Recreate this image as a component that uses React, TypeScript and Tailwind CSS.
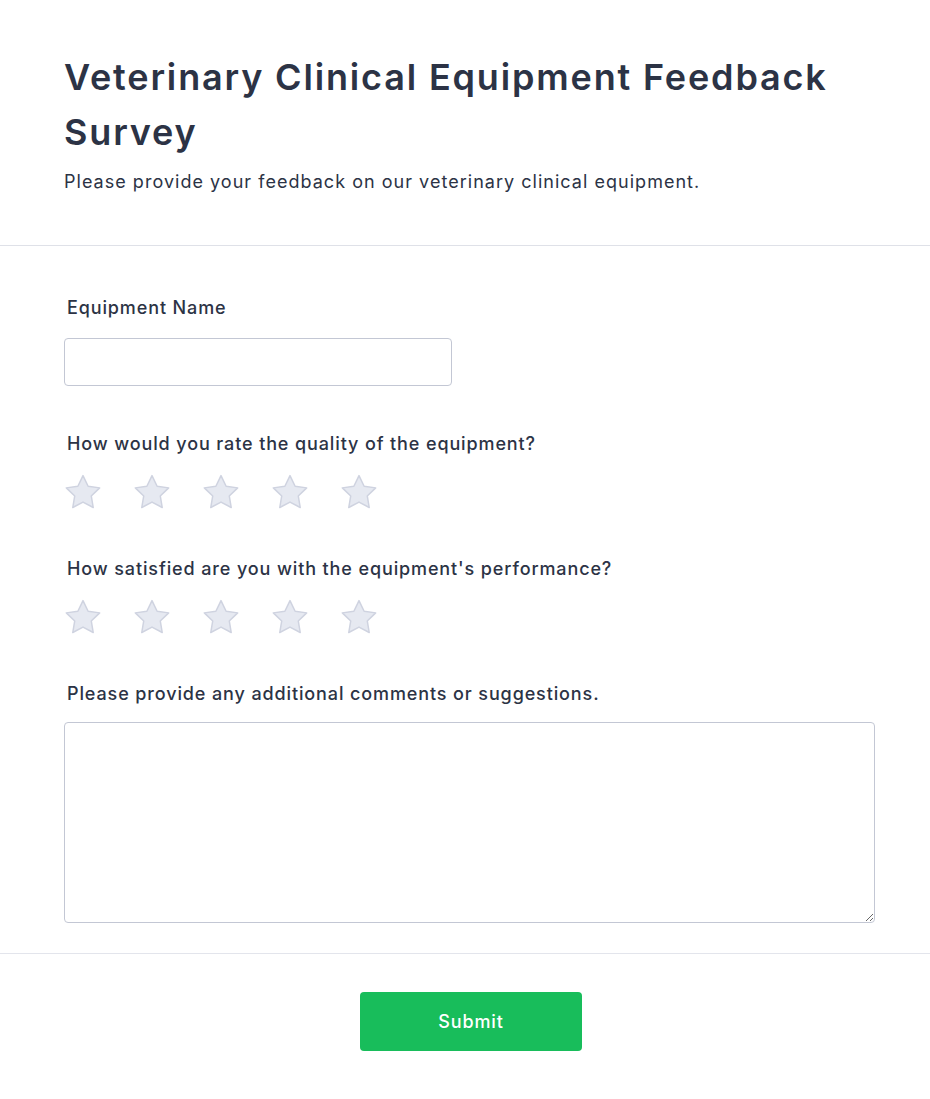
import React from 'react';

const Star = () => (
  <svg width="40" height="38" viewBox="0 0 24 23" className="block">
    <path
      d="M12 1.6l3.1 6.4 7 1-5.1 4.9 1.2 7-6.2-3.3-6.2 3.3 1.2-7L1.9 9l7-1z"
      fill="#e6e9f1"
      stroke="#cfd3e0"
      strokeWidth="0.9"
      strokeLinejoin="round"
    />
  </svg>
);

const StarRow = () => (
  <div className="flex gap-[29px] ml-[-1px]">
    {[0, 1, 2, 3, 4].map((i) => (
      <Star key={i} />
    ))}
  </div>
);

const App = () => {
  return (
    <div
      className="min-h-[1099px] bg-white text-[#2c3345] tracking-[0.055em]"
      style={{ fontFamily: 'Inter, "Noto Sans", sans-serif' }}
    >
      {/* Header */}
      <div className="pl-[64px] pr-[55px] pt-[50px] pb-[51px] border-b border-[#dfe1e8]">
        <h1 className="text-[36px] leading-[55px] font-semibold tracking-[0.051em]">
          Veterinary Clinical Equipment Feedback Survey
        </h1>
        <p className="text-[18px] leading-[24px] mt-[10px] tracking-[0.057em]">
          Please provide your feedback on our veterinary clinical equipment.
        </p>
      </div>

      {/* Form */}
      <div className="pl-[64px] pr-[55px] pt-[50px] pb-[30px] border-b border-[#e3e5ec]">
        <label className="block text-[18px] leading-[24px] font-medium pl-[3px]">
          Equipment Name
        </label>
        <input
          type="text"
          className="block mt-[18px] w-[388px] h-[48px] rounded-[4px] border border-[#c3c7d4] outline-none px-3"
        />

        <p className="text-[18px] leading-[24px] font-medium pl-[3px] mt-[46px]">
          How would you rate the quality of the equipment?
        </p>
        <div className="mt-[17px]">
          <StarRow />
        </div>

        <p className="text-[18px] leading-[24px] font-medium pl-[3px] mt-[46px]">
          How satisfied are you with the equipment's performance?
        </p>
        <div className="mt-[17px]">
          <StarRow />
        </div>

        <p className="text-[18px] leading-[24px] font-medium pl-[3px] mt-[46px]">
          Please provide any additional comments or suggestions.
        </p>
        <textarea className="block mt-[16px] w-full h-[201px] rounded-[4px] border border-[#c3c7d4] outline-none p-3" />
      </div>

      {/* Footer */}
      <div className="flex justify-center pt-[38px] pl-[12px]">
        <button className="w-[222px] h-[59px] rounded-[4px] bg-[#18bd5b] text-white text-[18px] font-medium tracking-[0.05em]">
          Submit
        </button>
      </div>
    </div>
  );
};

export default App;
